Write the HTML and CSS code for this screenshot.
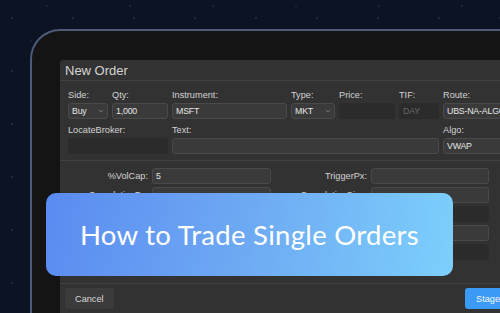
FILE: index.html
```html
<!DOCTYPE html>
<html lang="en">
<head>
    <meta charset="UTF-8">
    <meta name="viewport" content="width=device-width, initial-scale=1.0">
    <title>How to Trade Single Orders</title>
    <link rel="stylesheet" href="styles.css">
</head>
<body>
    <div class="device">
        <div class="dialog">
            <div class="dialog-title">New Order</div>

            <div class="order-grid">
                <label class="field">
                    <span>Side:</span>
                    <div class="input select">Buy
                        <svg viewBox="0 0 8 5"><polyline points="1,1 4,4 7,1"/></svg>
                    </div>
                </label>
                <label class="field">
                    <span>Qty:</span>
                    <div class="input">1,000</div>
                </label>
                <label class="field">
                    <span>Instrument:</span>
                    <div class="input">MSFT</div>
                </label>
                <label class="field">
                    <span>Type:</span>
                    <div class="input select">MKT
                        <svg viewBox="0 0 8 5"><polyline points="1,1 4,4 7,1"/></svg>
                    </div>
                </label>
                <label class="field">
                    <span>Price:</span>
                    <div class="input disabled"></div>
                </label>
                <label class="field">
                    <span>TIF:</span>
                    <div class="input disabled muted">DAY</div>
                </label>
                <label class="field">
                    <span>Route:</span>
                    <div class="input">UBS-NA-ALGO</div>
                </label>

                <label class="field span-2">
                    <span>LocateBroker:</span>
                    <div class="input disabled"></div>
                </label>
                <label class="field span-4">
                    <span>Text:</span>
                    <div class="input"></div>
                </label>
                <label class="field">
                    <span>Algo:</span>
                    <div class="input">VWAP</div>
                </label>
            </div>

            <div class="algo-grid">
                <span class="algo-label">%VolCap:</span>
                <div class="input">5</div>
                <span class="algo-label">TriggerPx:</span>
                <div class="input"></div>

                <span class="algo-label">CumulativePx:</span>
                <div class="input"></div>
                <span class="algo-label">CumulativeSize:</span>
                <div class="input"></div>

                <span class="algo-label"></span>
                <div class="input disabled"></div>
                <span class="algo-label"></span>
                <div class="input disabled"></div>

                <span class="algo-label"></span>
                <div class="input select"></div>
                <span class="algo-label"></span>
                <div class="input select">
                    <svg viewBox="0 0 8 5"><polyline points="1,1 4,4 7,1"/></svg>
                </div>

                <span class="algo-label"></span>
                <div class="input disabled"></div>
                <span class="algo-label"></span>
                <div class="input disabled"></div>
            </div>

            <div class="dialog-footer">
                <button class="btn">Cancel</button>
                <button class="btn primary">Stage</button>
            </div>
        </div>
    </div>

    <div class="banner">How to Trade Single Orders</div>
</body>
</html>
```

FILE: styles.css
```css
/* Basic Reset */
* {
    margin: 0;
    padding: 0;
    box-sizing: border-box;
}

body {
    width: 500px;
    height: 313px;
    overflow: hidden;
    position: relative;
    font-family: "Liberation Sans", Arial, sans-serif;
    background-color: #0c1424;
    background-image:
        radial-gradient(circle at 12px 18px, rgba(120, 140, 180, 0.22) 0.6px, transparent 1.2px),
        radial-gradient(circle at 47px 6px, rgba(120, 140, 180, 0.16) 0.6px, transparent 1.2px),
        radial-gradient(circle at 31px 41px, rgba(120, 140, 180, 0.14) 0.6px, transparent 1.2px);
    background-size: 61px 53px, 83px 37px, 47px 71px;
}

/* Device frame */
.device {
    margin: 29px 0 0 30px;
    height: 284px;
    overflow: hidden;
    border: 2px solid #4c5b77;
    border-right: none;
    border-bottom: none;
    border-top-left-radius: 30px;
    background-color: #141414;
    padding: 29px 0 0 28px;
}

/* Dialog */
.dialog {
    background-color: #323232;
    border-top-left-radius: 3px;
    color: #cfcfcf;
    font-size: 9.2px;
}

.dialog-title {
    height: 21px;
    padding: 3px 5px 0;
    font-size: 13px;
    color: #d4d4d4;
    border-bottom: 1px solid #424242;
}

.order-grid {
    display: grid;
    grid-template-columns: 40px 56px 115px 44px 56px 40px 70px;
    column-gap: 4px;
    row-gap: 5px;
    padding: 8px 8px 6px;
    border-bottom: 1px solid #424242;
}

.field {
    display: flex;
    flex-direction: column;
    gap: 2px;
}

.field span {
    line-height: 12px;
    color: #d2d2d2;
}

.span-2 { grid-column: span 2; }
.span-4 { grid-column: span 4; }

.input {
    height: 16px;
    line-height: 14px;
    padding: 0 3px;
    font-size: 8.8px;
    letter-spacing: -0.2px;
    background-color: #3a3a3a;
    border: 1px solid #4a4a4a;
    border-radius: 3px;
    color: #e6e6e6;
    white-space: nowrap;
    overflow: hidden;
}

.input.disabled {
    background-color: #2b2b2b;
    border-color: #2b2b2b;
}

.input.muted {
    color: #666;
}

.select {
    display: flex;
    align-items: center;
    justify-content: space-between;
}

.select svg {
    width: 6px;
    height: 4px;
    fill: none;
    stroke: #8f8f8f;
    stroke-width: 1;
}

.algo-grid {
    display: grid;
    grid-template-columns: 80px 119px 92px 118px;
    column-gap: 4px;
    row-gap: 3px;
    align-items: center;
    height: 123px;
    align-content: start;
    padding: 7px 8px 0;
    border-bottom: 1px solid #424242;
}

.algo-label {
    text-align: right;
    color: #d2d2d2;
}

.dialog-footer {
    display: flex;
    justify-content: space-between;
    padding: 4px 0 4px 5px;
    height: 30px;
}

.btn {
    font-family: inherit;
    font-size: 9.2px;
    padding: 0 10px;
    height: 21px;
    border: none;
    border-radius: 3px;
    background-color: #3b3b3b;
    color: #d8d8d8;
}

.btn.primary {
    background-color: #3b9af6;
    color: #f2f8ff;
    width: 35px;
    padding: 0 0 0 11px;
    text-align: left;
    border-radius: 3px 0 0 3px;
}

/* Overlay banner */
.banner {
    position: absolute;
    left: 46px;
    top: 193px;
    width: 407px;
    height: 83px;
    border-radius: 10px;
    background: linear-gradient(100deg, #5a8bf1 0%, #6eaaf3 50%, #7ccffc 100%);
    color: #ffffff;
    font-family: Lato, "Open Sans", sans-serif;
    font-size: 27.5px;
    display: flex;
    align-items: center;
    justify-content: center;
    letter-spacing: 0.3px;
}
```
